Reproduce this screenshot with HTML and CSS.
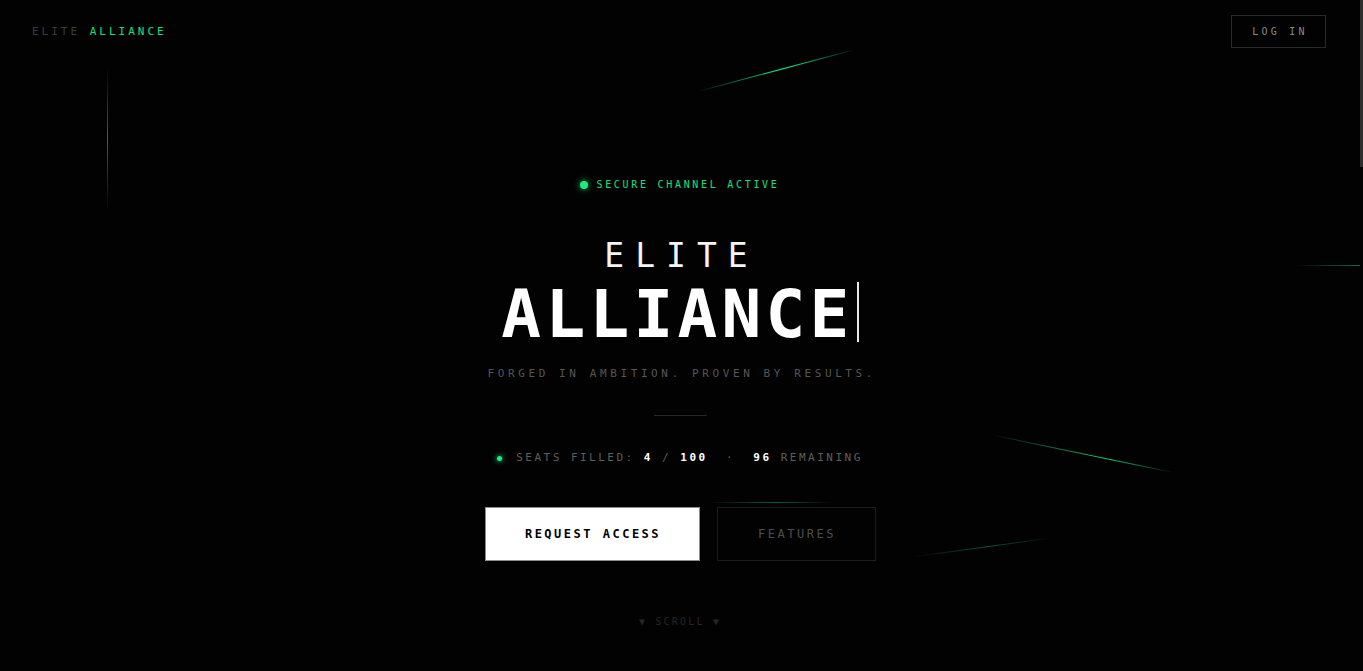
FILE: index.html
```html
<!DOCTYPE html>
<html lang="en">
<head>
<meta charset="utf-8">
<title>Elite Alliance</title>
<link rel="stylesheet" href="styles.css">
</head>
<body>
<div class="page">
  <div class="beam beam-1"></div>
  <div class="beam beam-2"></div>
  <div class="beam beam-3"></div>
  <div class="beam beam-4"></div>
  <div class="beam beam-5"></div>
  <div class="beam beam-6"></div>

  <header class="topbar">
    <div class="logo"><span class="logo-dim">ELITE</span> <span class="logo-accent">ALLIANCE</span></div>
    <button class="login">LOG IN</button>
  </header>

  <main class="hero">
    <div class="status"><span class="status-dot"></span><span class="status-text">SECURE CHANNEL ACTIVE</span></div>
    <h1 class="title">
      <span class="title-top">ELITE</span>
      <span class="title-main"><span class="title-word">ALLIANCE</span><span class="cursor"></span></span>
    </h1>
    <p class="tagline">FORGED IN AMBITION. PROVEN BY RESULTS.</p>
    <div class="divider"></div>
    <div class="seats"><span class="seats-dot"></span><span class="muted">SEATS FILLED: </span><span class="num">4</span><span class="muted"> / </span><span class="num">100</span><span class="muted">  ·  </span><span class="num">96</span><span class="muted"> REMAINING</span></div>
    <div class="actions">
      <button class="btn btn-primary">REQUEST ACCESS</button>
      <button class="btn btn-ghost">FEATURES</button>
    </div>
    <div class="scroll">▼ SCROLL ▼</div>
  </main>
</div>
<div class="scrollbar"></div>
</body>
</html>
```

FILE: styles.css
```css
* { box-sizing: border-box; }

html, body {
  margin: 0;
  padding: 0;
  background: #020202;
  height: 100%;
  overflow: hidden;
}

body {
  font-family: "DejaVu Sans Mono", "Liberation Mono", monospace;
  color: #fff;
}

.page {
  position: relative;
  width: calc(100vw - 3px);
  height: 100vh;
  overflow: hidden;
}

.scrollbar {
  position: fixed;
  top: 0;
  right: 0;
  width: 3px;
  height: 167px;
  background: #2e2e2e;
}

/* header */
.topbar {
  display: flex;
  justify-content: space-between;
  align-items: center;
  padding: 15px 34px 0 32px;
  height: 48px;
}

.logo {
  font-size: 11px;
  line-height: 14px;
  letter-spacing: 3px;
  white-space: pre;
  padding-top: 1px;
}
.logo-dim { color: #3c3c3c; }
.logo-accent { color: #10e07a; }

.login {
  font-family: inherit;
  background: transparent;
  border: 1px solid #2a2a2a;
  color: #8a8a8a;
  font-size: 10px;
  letter-spacing: 3.2px;
  width: 95px;
  height: 33px;
  padding: 1px 0 0 3px;
  line-height: 30px;
}

/* hero */
.hero {
  display: flex;
  flex-direction: column;
  align-items: center;
  padding-top: 131px;
}

.status {
  display: flex;
  align-items: center;
  gap: 8px;
  height: 12px;
}
.status-dot {
  width: 8px;
  height: 8px;
  border-radius: 50%;
  background: #19f080;
  box-shadow: 0 0 6px 1px rgba(25, 240, 128, 0.55);
}
.status-text {
  font-size: 10px;
  line-height: 12px;
  letter-spacing: 2.7px;
  color: #16e07a;
}

.title {
  margin: 44.5px 0 0;
  display: flex;
  flex-direction: column;
  align-items: center;
  font-weight: normal;
}
.title-top {
  font-size: 33px;
  line-height: 40px;
  letter-spacing: 11px;
  margin-right: -3px;
  color: #f4f4f4;
}
.title-main {
  display: flex;
  align-items: flex-start;
  margin-top: 4.5px;
  height: 70px;
}
.title-word {
  font-size: 66px;
  line-height: 70px;
  letter-spacing: 4.3px;
  font-weight: bold;
  color: #fff;
}
.cursor {
  width: 2px;
  height: 60px;
  margin: 2px 0 0 3px;
  background: #e8e8e8;
}

.tagline {
  margin: 17px 0 0;
  font-size: 11px;
  line-height: 14px;
  letter-spacing: 3.6px;
  margin-right: -3.6px;
  color: #565656;
}

.divider {
  margin-top: 34px;
  width: 53px;
  height: 1px;
  background: #262626;
}

.seats {
  margin-top: 35px;
  display: flex;
  align-items: center;
  font-size: 11px;
  line-height: 14px;
  letter-spacing: 2.5px;
  white-space: pre;
}
.seats-dot {
  width: 5px;
  height: 5px;
  border-radius: 50%;
  background: #19f080;
  box-shadow: 0 0 5px 1px rgba(25, 240, 128, 0.6);
  margin-right: 14px;
}
.muted { color: #5e5e5e; }
.num { color: #fff; font-weight: bold; }

.actions {
  margin-top: 42px;
  display: flex;
  gap: 16px;
}
.btn {
  font-family: inherit;
  font-size: 12px;
  line-height: 14px;
  letter-spacing: 2.5px;
  height: 54px;
  padding: 0 0 0 2px;
  cursor: pointer;
}
.btn-primary {
  width: 215px;
  background: #fff;
  color: #000;
  font-weight: bold;
  border: 1px solid #8c8c8c;
}
.btn-ghost {
  width: 159px;
  background: transparent;
  color: #4e4e4e;
  border: 1px solid #1b1b1b;
  margin-left: 1px;
}

.scroll {
  margin-top: 55px;
  font-size: 10px;
  line-height: 12px;
  letter-spacing: 2.2px;
  color: #262626;
}

/* decorative beams */
.beam {
  position: absolute;
  height: 1px;
  background: linear-gradient(90deg, rgba(0, 230, 118, 0), #19e985 55%, rgba(0, 230, 118, 0));
  transform-origin: center;
}
.beam-1 {
  left: 695px;
  top: 70px;
  width: 163px;
  transform: rotate(-15deg);
}
.beam-2 {
  left: 988px;
  top: 453px;
  width: 187px;
  transform: rotate(11.7deg);
  background: linear-gradient(90deg, rgba(0, 230, 118, 0), #15c873 65%, rgba(0, 230, 118, 0));
}
.beam-3 {
  left: 911px;
  top: 547px;
  width: 140px;
  transform: rotate(-7.8deg);
  opacity: 0.35;
}
.beam-4 {
  left: 107px;
  top: 68px;
  width: 1px;
  height: 142px;
  background: linear-gradient(180deg, rgba(0, 230, 118, 0), #137a45 50%, rgba(0, 230, 118, 0));
}
.beam-5 {
  left: 1296px;
  top: 265px;
  width: 64px;
  background: linear-gradient(90deg, rgba(0, 230, 118, 0), #1a6a44);
}
.beam-6 {
  left: 708px;
  top: 502px;
  width: 124px;
  opacity: 0.4;
}
```
